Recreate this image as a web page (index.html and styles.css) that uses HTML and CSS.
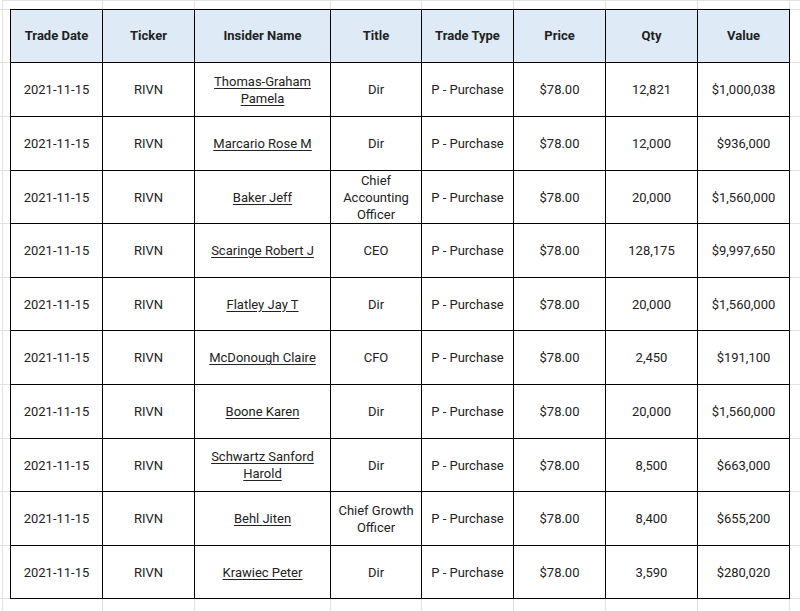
FILE: index.html
```html
<!DOCTYPE html>
<html lang="en">
<head>
<meta charset="utf-8">
<title>RIVN Insider Trades</title>
<link rel="stylesheet" href="styles.css">
</head>
<body>
<div class="sheet">
  <div class="trades">
    <div class="cell head">Trade Date</div>
    <div class="cell head">Ticker</div>
    <div class="cell head">Insider Name</div>
    <div class="cell head">Title</div>
    <div class="cell head">Trade Type</div>
    <div class="cell head">Price</div>
    <div class="cell head">Qty</div>
    <div class="cell head">Value</div>

    <div class="cell">2021-11-15</div><div class="cell">RIVN</div><div class="cell"><a href="#">Thomas-Graham Pamela</a></div><div class="cell">Dir</div><div class="cell">P - Purchase</div><div class="cell">$78.00</div><div class="cell">12,821</div><div class="cell">$1,000,038</div>

    <div class="cell">2021-11-15</div><div class="cell">RIVN</div><div class="cell"><a href="#">Marcario Rose M</a></div><div class="cell">Dir</div><div class="cell">P - Purchase</div><div class="cell">$78.00</div><div class="cell">12,000</div><div class="cell">$936,000</div>

    <div class="cell">2021-11-15</div><div class="cell">RIVN</div><div class="cell"><a href="#">Baker Jeff</a></div><div class="cell">Chief Accounting Officer</div><div class="cell">P - Purchase</div><div class="cell">$78.00</div><div class="cell">20,000</div><div class="cell">$1,560,000</div>

    <div class="cell">2021-11-15</div><div class="cell">RIVN</div><div class="cell"><a href="#">Scaringe Robert J</a></div><div class="cell">CEO</div><div class="cell">P - Purchase</div><div class="cell">$78.00</div><div class="cell">128,175</div><div class="cell">$9,997,650</div>

    <div class="cell">2021-11-15</div><div class="cell">RIVN</div><div class="cell"><a href="#">Flatley Jay T</a></div><div class="cell">Dir</div><div class="cell">P - Purchase</div><div class="cell">$78.00</div><div class="cell">20,000</div><div class="cell">$1,560,000</div>

    <div class="cell">2021-11-15</div><div class="cell">RIVN</div><div class="cell"><a href="#">McDonough Claire</a></div><div class="cell">CFO</div><div class="cell">P - Purchase</div><div class="cell">$78.00</div><div class="cell">2,450</div><div class="cell">$191,100</div>

    <div class="cell">2021-11-15</div><div class="cell">RIVN</div><div class="cell"><a href="#">Boone Karen</a></div><div class="cell">Dir</div><div class="cell">P - Purchase</div><div class="cell">$78.00</div><div class="cell">20,000</div><div class="cell">$1,560,000</div>

    <div class="cell">2021-11-15</div><div class="cell">RIVN</div><div class="cell"><a href="#">Schwartz Sanford Harold</a></div><div class="cell">Dir</div><div class="cell">P - Purchase</div><div class="cell">$78.00</div><div class="cell">8,500</div><div class="cell">$663,000</div>

    <div class="cell">2021-11-15</div><div class="cell">RIVN</div><div class="cell"><a href="#">Behl Jiten</a></div><div class="cell">Chief Growth Officer</div><div class="cell">P - Purchase</div><div class="cell">$78.00</div><div class="cell">8,400</div><div class="cell">$655,200</div>

    <div class="cell">2021-11-15</div><div class="cell">RIVN</div><div class="cell"><a href="#">Krawiec Peter</a></div><div class="cell">Dir</div><div class="cell">P - Purchase</div><div class="cell">$78.00</div><div class="cell">3,590</div><div class="cell">$280,020</div>
  </div>
</div>
</body>
</html>
```
FILE: styles.css
```css
html {
  --g: linear-gradient(#e2e2e2, #e2e2e2);
  height: 100%;
  background-color: #fff;
  background-repeat: no-repeat;
  background-image:
    var(--g), var(--g), var(--g), var(--g), var(--g), var(--g), var(--g), var(--g), var(--g),
    var(--g), var(--g), var(--g), var(--g), var(--g), var(--g), var(--g), var(--g), var(--g),
    var(--g), var(--g), var(--g), var(--g);
  background-size:
    1px 100%, 1px 100%, 1px 100%, 1px 100%, 1px 100%, 1px 100%, 1px 100%, 1px 100%, 1px 100%,
    100% 1px, 100% 1px, 100% 1px, 100% 1px, 100% 1px, 100% 1px, 100% 1px, 100% 1px, 100% 1px,
    100% 1px, 100% 1px, 100% 1px, 100% 1px;
  background-position:
    2px 0, 102px 0, 194px 0, 330px 0, 421px 0, 513px 0, 605px 0, 697px 0, 789px 0,
    0 9px, 0 62px, 0 116px, 0 170px, 0 223px, 0 277px, 0 330px, 0 384px, 0 438px,
    0 491px, 0 545px, 0 598px;
}

body {
  margin: 0;
  height: 611px;
  overflow: hidden;
  font-family: Roboto, "Liberation Sans", Arial, sans-serif;
  font-size: 13px;
  color: #222;
}

.sheet {
  padding: 9px 0 0 10px;
}

.trades {
  display: grid;
  grid-template-columns: 92px 92px 136px 91px 92px 92px 92px 92px;
  grid-template-rows: 53px 54px 54px 53px 54px 53px 54px 54px 53px 54px 53px;
  width: max-content;
  border-left: 1px solid #000;
  border-top: 1px solid #000;
  background: #fff;
}

.cell {
  box-sizing: border-box;
  border-right: 1px solid #000;
  border-bottom: 1px solid #000;
  display: flex;
  align-items: center;
  justify-content: center;
  text-align: center;
  padding: 0 4px;
  line-height: 17px;
}

.head {
  background: #deeaf5;
  font-weight: 700;
  color: #222;
  padding-bottom: 2px;
}

.cell a {
  color: inherit;
  text-decoration: underline;
  text-underline-offset: 2px;
}
```
